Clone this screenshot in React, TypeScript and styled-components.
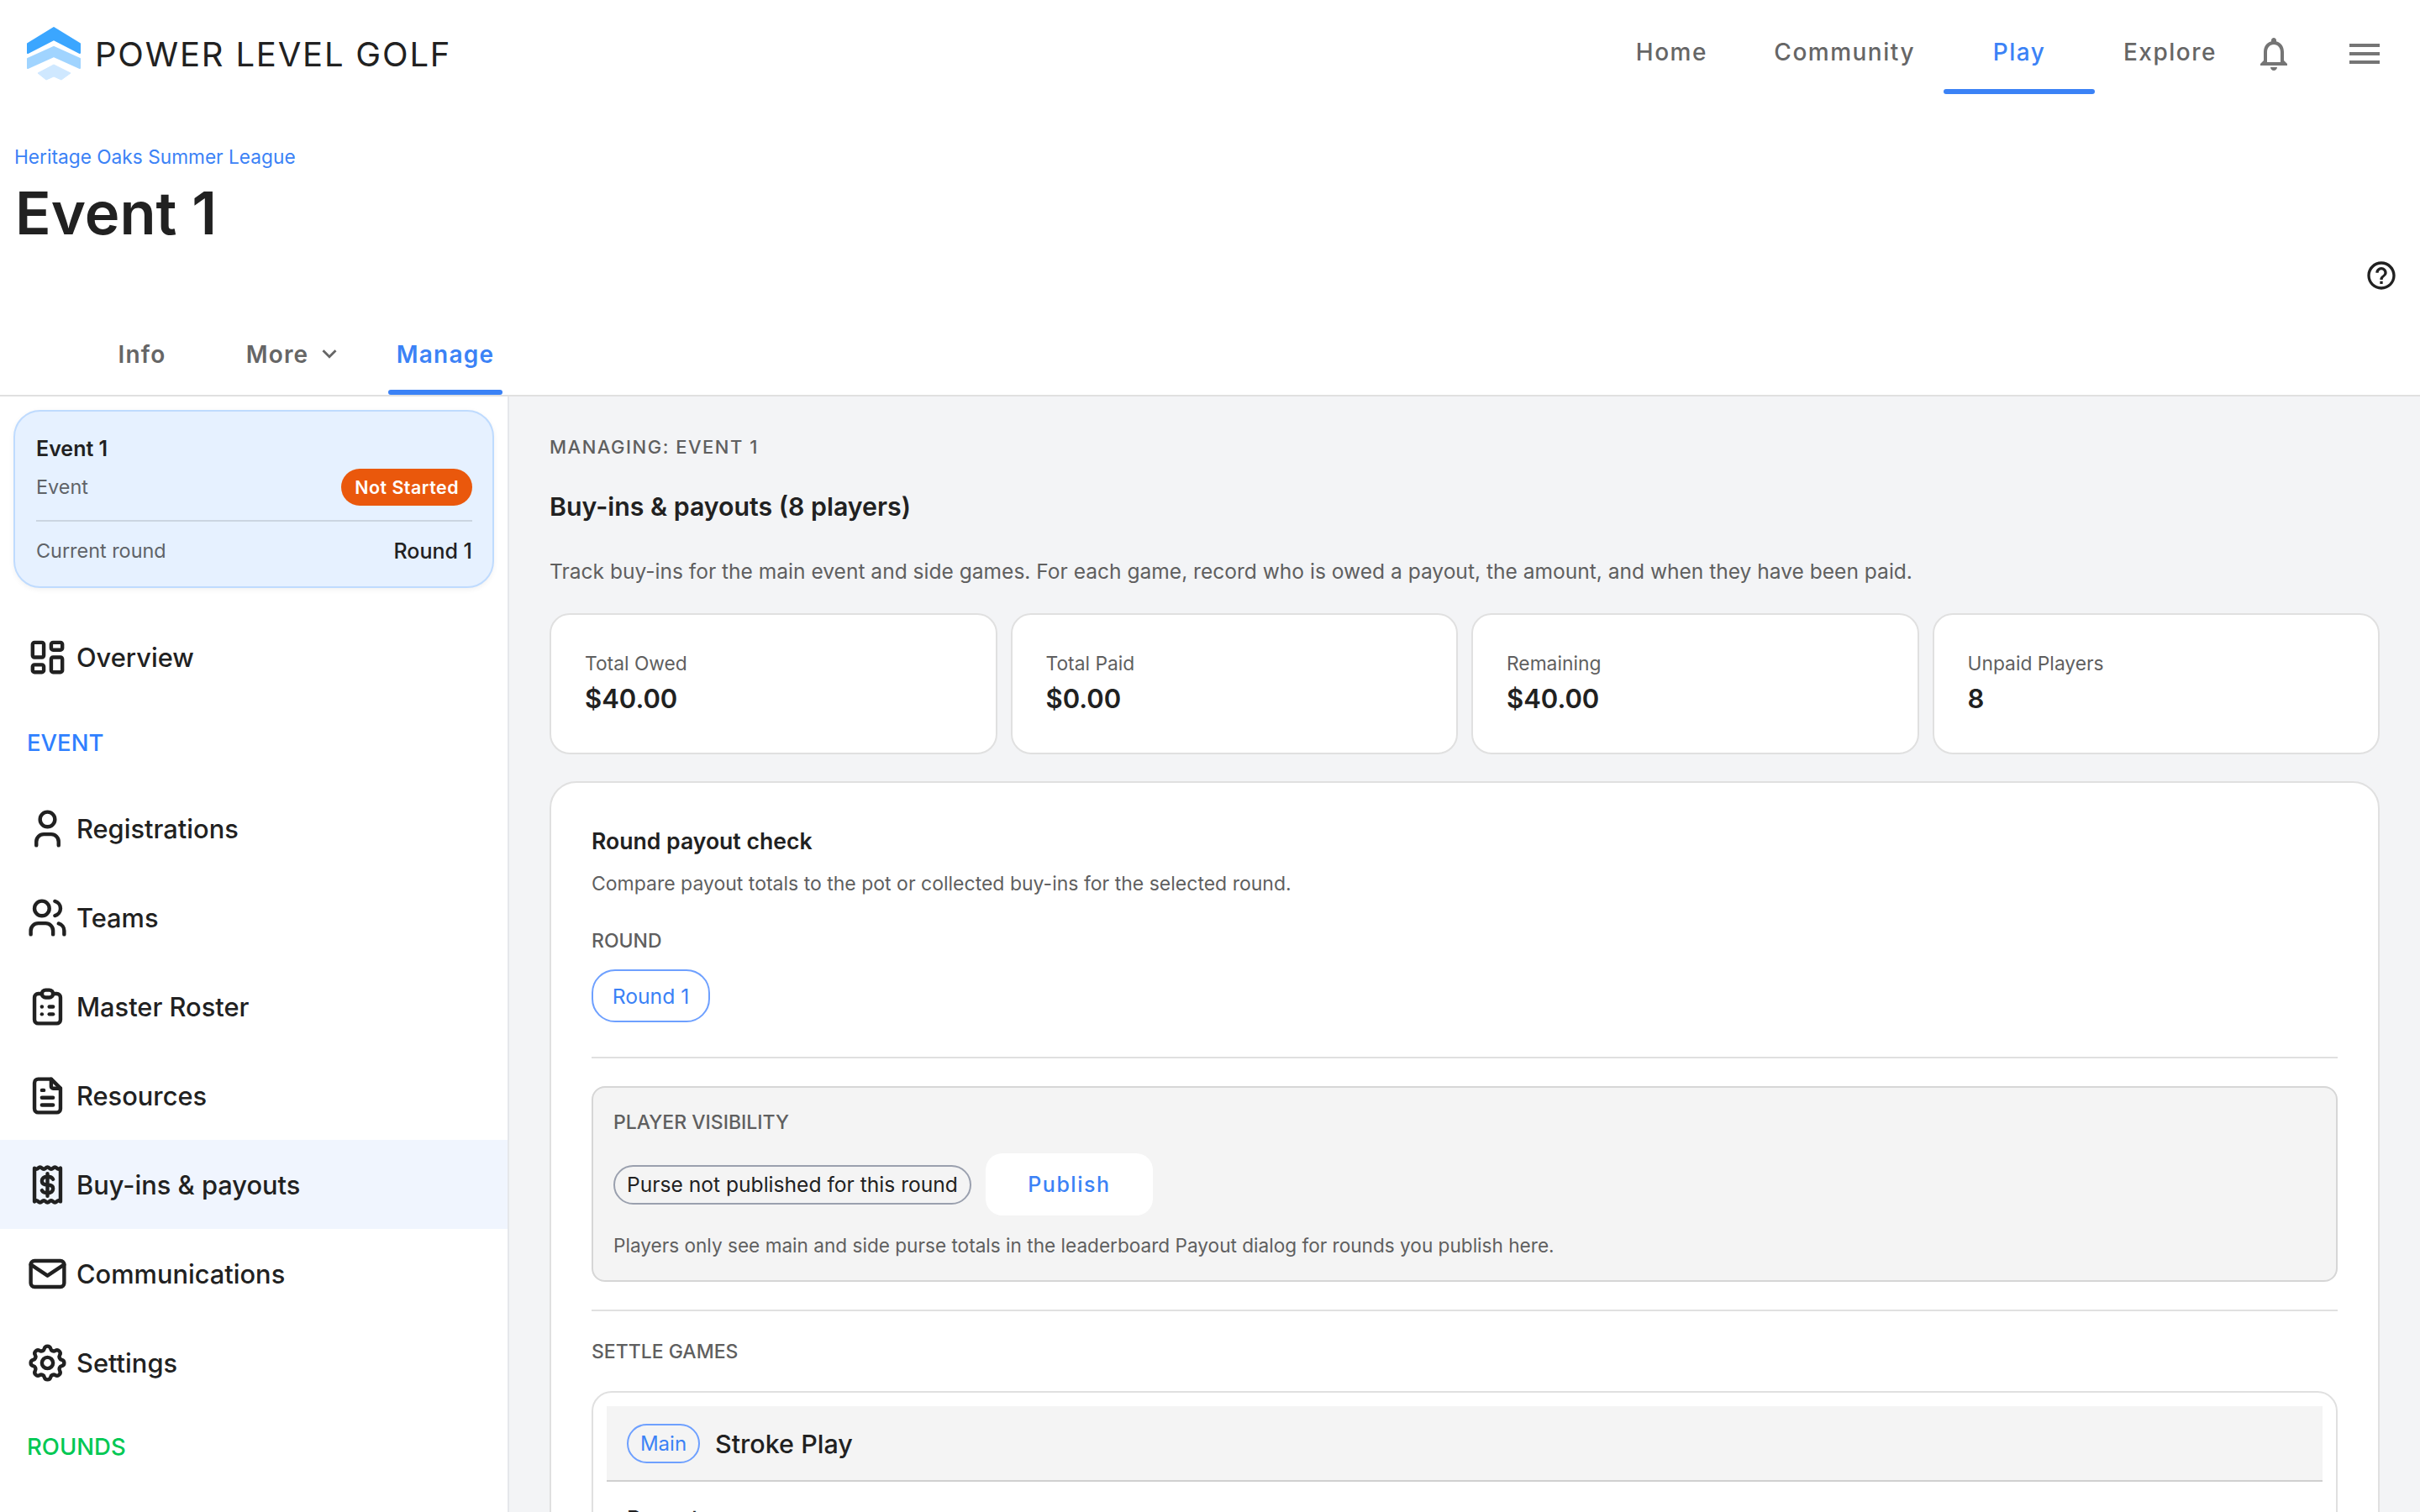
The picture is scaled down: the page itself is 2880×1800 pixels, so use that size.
import React, { FC, ReactNode } from "react";
import styled, { createGlobalStyle } from "styled-components";
import { MdNotificationsNone, MdMenu, MdHelpOutline, MdKeyboardArrowDown } from "react-icons/md";
import { TbLayoutDashboard, TbUser, TbUsers, TbClipboardList, TbFileText, TbMail, TbSettings } from "react-icons/tb";

const GlobalStyle = createGlobalStyle`
  * { box-sizing: border-box; }
  html, body { margin: 0; padding: 0; background: #fff; }
  body { font-family: Inter, "Noto Sans", "Liberation Sans", sans-serif; color: #212121; }
`;

const Page = styled.div`
  width: 2880px;
  height: 1800px;
  overflow: hidden;
  display: flex;
  flex-direction: column;
  background: #fff;
`;

const Header = styled.header`
  height: 112px;
  flex: none;
  display: flex;
  align-items: center;
  padding: 16px 42px 0 32px;
`;

const Brand = styled.div`
  display: flex;
  align-items: center;
  gap: 17px;
  margin-right: auto;
`;

const BrandName = styled.span`
  font-size: 40px;
  font-weight: 400;
  letter-spacing: 1.8px;
  color: #212121;
`;

const TopNav = styled.nav`
  display: flex;
  align-self: stretch;
  margin-top: -16px;
  margin-right: 10px;
`;

const TopLink = styled.a<{ $active?: boolean }>`
  position: relative;
  min-width: 176px;
  padding: 12px 34px 0;
  display: flex;
  align-items: center;
  justify-content: center;
  font-size: 28px;
  font-weight: 500;
  letter-spacing: 1.5px;
  color: ${(p) => (p.$active ? "#3b82f6" : "#666")};
  ${(p) =>
    p.$active &&
    `min-width: 180px;
     &::after {
       content: "";
       position: absolute;
       left: 0;
       right: 0;
       bottom: 0;
       height: 6px;
       border-radius: 3px;
       background: #3b82f6;
     }`}
`;

const IconButton = styled.button<{ $gap?: number }>`
  width: 48px;
  height: 48px;
  padding: 0;
  border: none;
  background: none;
  color: #757575;
  font-size: 48px;
  display: flex;
  margin-left: ${(p) => p.$gap ?? 0}px;
`;

const PageHead = styled.div`
  height: 292px;
  flex: none;
  display: flex;
  flex-direction: column;
  padding: 60px 26px 0 17px;
`;

const Crumb = styled.a`
  font-size: 22.7px;
  line-height: 30px;
  color: #3b82f6;
`;

const Title = styled.h1`
  margin: 12px 0 0 1px;
  font-size: 70.5px;
  line-height: 80px;
  font-weight: 600;
  color: #212121;
`;

const HelpRow = styled.div`
  display: flex;
  justify-content: flex-end;
  margin-top: 14px;
  font-size: 40px;
  line-height: 0;
  color: #212121;
`;

const Tabs = styled.div`
  height: 68px;
  flex: none;
  display: flex;
  padding-left: 118px;
  border-bottom: 2px solid #e0e0e0;
`;

const Tab = styled.a<{ $active?: boolean; $width: number; $shift?: number }>`
  position: relative;
  width: ${(p) => p.$width}px;
  padding-left: ${(p) => p.$shift ?? 0}px;
  display: flex;
  align-items: flex-start;
  justify-content: center;
  gap: 8px;
  font-size: 28px;
  line-height: 36px;
  font-weight: 600;
  letter-spacing: 1.2px;
  color: ${(p) => (p.$active ? "#3b82f6" : "#666")};
  ${(p) =>
    p.$active &&
    `&::after {
       content: "";
       position: absolute;
       left: 0;
       right: 0;
       bottom: 0;
       height: 6px;
       border-radius: 3px;
       background: #3b82f6;
     }`}
`;

const Body = styled.div`
  flex: 1;
  min-height: 0;
  display: flex;
`;

const Sidebar = styled.aside`
  width: 606px;
  flex: none;
  background: #fff;
  border-right: 2px solid #e5e7eb;
  padding-top: 16px;
`;

const EventCard = styled.div`
  margin: 0 16px;
  height: 212px;
  padding: 26px 24px 0 25px;
  background: #e6f1ff;
  border: 2px solid #bfdbfe;
  border-radius: 32px;
  box-shadow: 0 2px 6px rgba(0, 0, 0, 0.06);
`;

const EventName = styled.div`
  font-size: 25px;
  line-height: 36px;
  font-weight: 600;
`;

const EventRow = styled.div<{ $divided?: boolean }>`
  display: flex;
  align-items: center;
  justify-content: space-between;
  margin-top: 6px;
  ${(p) => p.$divided && "border-top: 2px solid #cbd5e1; margin-top: 17px; padding-top: 18px;"}
`;

const MetaLabel = styled.span`
  font-size: 23.4px;
  line-height: 34px;
  color: #5f6368;
`;

const MetaValue = styled.span`
  font-size: 25px;
  line-height: 34px;
  font-weight: 500;
  color: #212121;
`;

const StatusBadge = styled.span`
  height: 44px;
  padding: 0 16px;
  display: flex;
  align-items: center;
  border-radius: 22px;
  background: #ea580c;
  color: #fff;
  font-size: 21.4px;
  font-weight: 600;
  letter-spacing: 0.5px;
`;

const NavList = styled.div`
  display: flex;
  flex-direction: column;
  margin-top: 29px;
`;

const NavItem = styled.a<{ $active?: boolean }>`
  height: 106px;
  display: flex;
  align-items: center;
  gap: 8px;
  padding-left: 30px;
  font-size: 30.8px;
  font-weight: 500;
  color: #212121;
  background: ${(p) => (p.$active ? "#f0f5fe" : "transparent")};
  svg { width: 53px; height: 53px; flex: none; }
`;

const NavSection = styled.div<{ $color: string; $height: number }>`
  height: ${(p) => p.$height}px;
  display: flex;
  align-items: center;
  padding-left: 32px;
  font-size: 27.5px;
  font-weight: 500;
  color: ${(p) => p.$color};
`;

const Main = styled.main`
  flex: 1;
  min-width: 0;
  background: #f3f4f6;
  padding: 43px 48px 0;
`;

const Eyebrow = styled.div`
  font-size: 22px;
  line-height: 34px;
  font-weight: 500;
  letter-spacing: 1.5px;
  color: #5f5f5f;
`;

const Heading = styled.h2`
  margin: 32px 0 0;
  font-size: 30.3px;
  line-height: 44px;
  font-weight: 600;
  color: #212121;
`;

const Lead = styled.p`
  margin: 37px 0 0;
  font-size: 24.55px;
  line-height: 36px;
  color: #5f5f5f;
`;

const StatGrid = styled.div`
  display: grid;
  grid-template-columns: repeat(4, 1fr);
  gap: 16px;
  margin-top: 32px;
`;

const StatCard = styled.div`
  height: 168px;
  padding: 42px 40px 0;
  background: #fff;
  border: 2px solid #e0e0e0;
  border-radius: 24px;
`;

const StatLabel = styled.div`
  font-size: 22.8px;
  line-height: 32px;
  color: #5f5f5f;
`;

const StatValue = styled.div`
  margin-top: 4px;
  font-size: 31px;
  line-height: 44px;
  font-weight: 600;
  color: #212121;
`;

const Panel = styled.section`
  margin-top: 32px;
  padding: 49px 48px 0;
  background: #fff;
  border: 2px solid #e0e0e0;
  border-radius: 32px;
  height: 1000px;
`;

const PanelTitle = styled.h3`
  margin: 0;
  font-size: 26.6px;
  line-height: 40px;
  font-weight: 600;
  color: #212121;
`;

const PanelText = styled.p`
  margin: 14px 0 0;
  font-size: 23px;
  line-height: 34px;
  color: #5f5f5f;
`;

const FieldLabel = styled.div<{ $top: number }>`
  margin-top: ${(p) => p.$top}px;
  font-size: 23px;
  line-height: 32px;
  font-weight: 500;
  color: #5f5f5f;
`;

const RoundPill = styled.span`
  display: flex;
  align-items: center;
  justify-content: center;
  width: 141px;
  height: 63px;
  margin-top: 18px;
  border: 2px solid #6ea0ff;
  border-radius: 28px;
  font-size: 24.7px;
  color: #3b82f6;
`;

const Rule = styled.hr<{ $top: number }>`
  margin: ${(p) => p.$top}px 0 0;
  border: none;
  height: 2px;
  background: #e0e0e0;
`;

const VisibilityBox = styled.div`
  margin-top: 33px;
  height: 233px;
  padding: 25px 24px 0;
  background: #f4f4f4;
  border: 2px solid #d6d6d6;
  border-radius: 16px;
`;

const VisibilityRow = styled.div`
  display: flex;
  align-items: center;
  gap: 17px;
  margin-top: 21px;
`;

const PursePill = styled.span`
  height: 47px;
  padding: 0 14px;
  display: flex;
  align-items: center;
  border: 2px solid #9aa0ae;
  border-radius: 24px;
  font-size: 24.6px;
  color: #212121;
`;

const PublishButton = styled.button`
  width: 199px;
  height: 74px;
  border: none;
  border-radius: 20px;
  background: #fff;
  color: #3b82f6;
  font-family: inherit;
  font-size: 25px;
  font-weight: 500;
  letter-spacing: 1.5px;
`;

const VisibilityNote = styled.p`
  margin: 19px 0 0;
  font-size: 22.6px;
  line-height: 34px;
  color: #5f5f5f;
`;

const GameCard = styled.div`
  margin-top: 31px;
  padding: 16px;
  background: #fff;
  border: 2px solid #e0e0e0;
  border-radius: 24px;
`;

const GameHead = styled.div`
  height: 90px;
  display: flex;
  align-items: center;
  gap: 18px;
  padding-left: 24px;
  background: #f4f4f4;
  border-bottom: 2px solid #d0d0d0;
`;

const MainPill = styled.span`
  width: 87px;
  height: 47px;
  display: flex;
  align-items: center;
  justify-content: center;
  border: 2px solid #6ea0ff;
  border-radius: 24px;
  font-size: 24px;
  color: #3b82f6;
`;

const GameName = styled.span`
  font-size: 30.5px;
  font-weight: 500;
  color: #212121;
`;

const GameBody = styled.div`
  padding: 27px 24px 0;
  font-size: 26px;
  line-height: 34px;
  font-weight: 500;
  color: #212121;
`;

const Logo: FC = () => (
  <svg width="64" height="64" viewBox="0 0 64 64">
    <path d="M32 1 L63 20 V31 L32 15 L1 31 V20 Z" fill="#3ba6ff" stroke="#3ba6ff" strokeWidth="2" strokeLinejoin="round" />
    <path d="M32 24 L63 38 V49 L32 35 L1 49 V38 Z" fill="#a0d4ff" stroke="#a0d4ff" strokeWidth="2" strokeLinejoin="round" />
    <path d="M32 45 L52 55 L41 63 L32 59 L23 63 L13 55 Z" fill="#cfe8ff" stroke="#cfe8ff" strokeWidth="1" strokeLinejoin="round" />
  </svg>
);

const ReceiptIcon: FC = () => (
  <svg viewBox="0 0 24 24" fill="none" stroke="currentColor" strokeWidth="2" strokeLinejoin="round" strokeLinecap="round">
    <path d="M5 3 Q6 4 7 3 T9 3 T11 3 T13 3 T15 3 T17 3 T19 3 V21 Q18 20 17 21 T15 21 T13 21 T11 21 T9 21 T7 21 T5 21 Z" />
    <path d="M15 9 C14.5 8 13.5 7.6 12 7.6 C10 7.6 9 8.6 9 10 C9 11.4 10 12 12 12 C14 12 15 12.6 15 14 C15 15.4 14 16.4 12 16.4 C10.5 16.4 9.5 16 9 15 M12 6 V18" />
  </svg>
);

const navItems: { label: string; icon: ReactNode; active?: boolean }[] = [
  { label: "Registrations", icon: <TbUser /> },
  { label: "Teams", icon: <TbUsers /> },
  { label: "Master Roster", icon: <TbClipboardList /> },
  { label: "Resources", icon: <TbFileText /> },
  { label: "Buy-ins & payouts", icon: <ReceiptIcon />, active: true },
  { label: "Communications", icon: <TbMail /> },
  { label: "Settings", icon: <TbSettings /> },
];

const stats = [
  { label: "Total Owed", value: "$40.00" },
  { label: "Total Paid", value: "$0.00" },
  { label: "Remaining", value: "$40.00" },
  { label: "Unpaid Players", value: "8" },
];

const App: FC = () => (
  <Page>
    <GlobalStyle />
    <Header>
      <Brand>
        <Logo />
        <BrandName>POWER LEVEL GOLF</BrandName>
      </Brand>
      <TopNav>
        <TopLink>Home</TopLink>
        <TopLink>Community</TopLink>
        <TopLink $active>Play</TopLink>
        <TopLink>Explore</TopLink>
      </TopNav>
      <IconButton type="button"><MdNotificationsNone /></IconButton>
      <IconButton type="button" $gap={60}><MdMenu /></IconButton>
    </Header>
    <PageHead>
      <Crumb>Heritage Oaks Summer League</Crumb>
      <Title>Event 1</Title>
      <HelpRow><MdHelpOutline /></HelpRow>
    </PageHead>
    <Tabs>
      <Tab $width={102}>Info</Tab>
      <Tab $width={242} $shift={20}>More <MdKeyboardArrowDown size={34} /></Tab>
      <Tab $width={136} $active>Manage</Tab>
    </Tabs>
    <Body>
      <Sidebar>
        <EventCard>
          <EventName>Event 1</EventName>
          <EventRow>
            <MetaLabel>Event</MetaLabel>
            <StatusBadge>Not Started</StatusBadge>
          </EventRow>
          <EventRow $divided>
            <MetaLabel>Current round</MetaLabel>
            <MetaValue>Round 1</MetaValue>
          </EventRow>
        </EventCard>
        <NavList>
          <NavItem><TbLayoutDashboard />Overview</NavItem>
          <NavSection $color="#2f80ff" $height={98}>EVENT</NavSection>
          {navItems.map((item) => (
            <NavItem key={item.label} $active={item.active}>
              {item.icon}
              {item.label}
            </NavItem>
          ))}
          <NavSection $color="#00c853" $height={93}>ROUNDS</NavSection>
        </NavList>
      </Sidebar>
      <Main>
        <Eyebrow>MANAGING: EVENT 1</Eyebrow>
        <Heading>Buy-ins &amp; payouts (8 players)</Heading>
        <Lead>Track buy-ins for the main event and side games. For each game, record who is owed a payout, the amount, and when they have been paid.</Lead>
        <StatGrid>
          {stats.map((s) => (
            <StatCard key={s.label}>
              <StatLabel>{s.label}</StatLabel>
              <StatValue>{s.value}</StatValue>
            </StatCard>
          ))}
        </StatGrid>
        <Panel>
          <PanelTitle>Round payout check</PanelTitle>
          <PanelText>Compare payout totals to the pot or collected buy-ins for the selected round.</PanelText>
          <FieldLabel $top={35}>ROUND</FieldLabel>
          <RoundPill>Round 1</RoundPill>
          <Rule $top={41} />
          <VisibilityBox>
            <FieldLabel $top={0}>PLAYER VISIBILITY</FieldLabel>
            <VisibilityRow>
              <PursePill>Purse not published for this round</PursePill>
              <PublishButton type="button">Publish</PublishButton>
            </VisibilityRow>
            <VisibilityNote>Players only see main and side purse totals in the leaderboard Payout dialog for rounds you publish here.</VisibilityNote>
          </VisibilityBox>
          <Rule $top={33} />
          <FieldLabel $top={32}>SETTLE GAMES</FieldLabel>
          <GameCard>
            <GameHead>
              <MainPill>Main</MainPill>
              <GameName>Stroke Play</GameName>
            </GameHead>
            <GameBody>Payout</GameBody>
          </GameCard>
        </Panel>
      </Main>
    </Body>
  </Page>
);

export default App;
